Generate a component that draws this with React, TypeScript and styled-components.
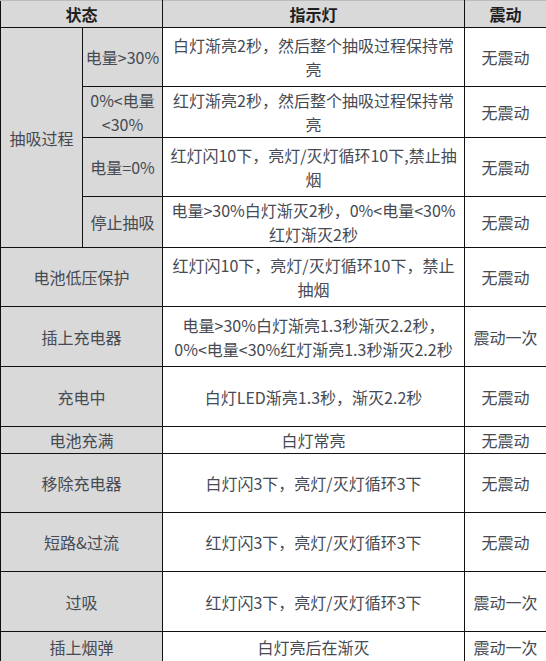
import React from 'react';
import styled, { createGlobalStyle } from 'styled-components';

const GlobalStyle = createGlobalStyle`
    html, body {
        margin: 0;
        padding: 0;
        background: #ffffff;
    }
    body {
        font-family: "Noto Sans CJK SC", "Noto Sans", sans-serif;
    }
`;

const Table = styled.table`
    width: 546px;
    table-layout: fixed;
    border-collapse: collapse;
    font-size: 16px;
    line-height: 24px;
    color: #464a52;
`;

const HeadCell = styled.th`
    background: #d9d9d9;
    border: 1px solid #111;
    border-top-color: #bbb;
    font-weight: 700;
    color: #1e1e1e;
    text-align: center;
    padding: 0;
`;

const Row = styled.tr<{ $h: number }>`
    height: ${(p) => p.$h}px;
`;

const Cell = styled.td<{ $gray?: boolean }>`
    background: ${(p) => (p.$gray ? '#d9d9d9' : '#ffffff')};
    border: 1px solid #111;
    text-align: center;
    vertical-align: middle;
    padding: 0 2px;
    white-space: nowrap;
`;

interface RowData {
    h: number;
    state: React.ReactNode;
    light: React.ReactNode;
    shake: string;
}

// 抽吸过程 아래의 세부 상태
const suction: RowData[] = [
    {
        h: 59,
        state: '电量>30%',
        light: <>白灯渐亮2秒，然后整个抽吸过程保持常<br />亮</>,
        shake: '无震动',
    },
    {
        h: 51,
        state: <>0%&lt;电量<br />&lt;30%</>,
        light: <>红灯渐亮2秒，然后整个抽吸过程保持常<br />亮</>,
        shake: '无震动',
    },
    {
        h: 59,
        state: '电量=0%',
        light: <>红灯闪10下，亮灯/灭灯循环10下,禁止抽<br />烟</>,
        shake: '无震动',
    },
    {
        h: 51,
        state: '停止抽吸',
        light: <>电量&gt;30%白灯渐灭2秒，0%&lt;电量&lt;30%<br />红灯渐灭2秒</>,
        shake: '无震动',
    },
];

const others: RowData[] = [
    {
        h: 59,
        state: '电池低压保护',
        light: <>红灯闪10下，亮灯/灭灯循环10下，禁止<br />抽烟</>,
        shake: '无震动',
    },
    {
        h: 60,
        state: '插上充电器',
        light: <>电量&gt;30%白灯渐亮1.3秒渐灭2.2秒，<br />0%&lt;电量&lt;30%红灯渐亮1.3秒渐灭2.2秒</>,
        shake: '震动一次',
    },
    { h: 60, state: '充电中', light: '白灯LED渐亮1.3秒，渐灭2.2秒', shake: '无震动' },
    { h: 27, state: '电池充满', light: '白灯常亮', shake: '无震动' },
    { h: 59, state: '移除充电器', light: '白灯闪3下，亮灯/灭灯循环3下', shake: '无震动' },
    { h: 59, state: '短路&过流', light: '红灯闪3下，亮灯/灭灯循环3下', shake: '无震动' },
    { h: 60, state: '过吸', light: '红灯闪3下，亮灯/灭灯循环3下', shake: '震动一次' },
    { h: 30, state: '插上烟弹', light: '白灯亮后在渐灭', shake: '震动一次' },
];

function App() {
    return (
        <>
            <GlobalStyle />
            <Table>
                <colgroup>
                    <col style={{ width: 82 }} />
                    <col style={{ width: 80 }} />
                    <col style={{ width: 302 }} />
                    <col style={{ width: 82 }} />
                </colgroup>
                <thead>
                    <Row $h={27}>
                        <HeadCell colSpan={2}>状态</HeadCell>
                        <HeadCell>指示灯</HeadCell>
                        <HeadCell>震动</HeadCell>
                    </Row>
                </thead>
                <tbody>
                    {suction.map((r, i) => (
                        <Row $h={r.h} key={i}>
                            {i === 0 && (
                                <Cell $gray rowSpan={suction.length}>
                                    抽吸过程
                                </Cell>
                            )}
                            <Cell $gray>{r.state}</Cell>
                            <Cell>{r.light}</Cell>
                            <Cell>{r.shake}</Cell>
                        </Row>
                    ))}
                    {others.map((r, i) => (
                        <Row $h={r.h} key={`o${i}`}>
                            <Cell $gray colSpan={2}>
                                {r.state}
                            </Cell>
                            <Cell>{r.light}</Cell>
                            <Cell>{r.shake}</Cell>
                        </Row>
                    ))}
                </tbody>
            </Table>
        </>
    );
}

export default App;
